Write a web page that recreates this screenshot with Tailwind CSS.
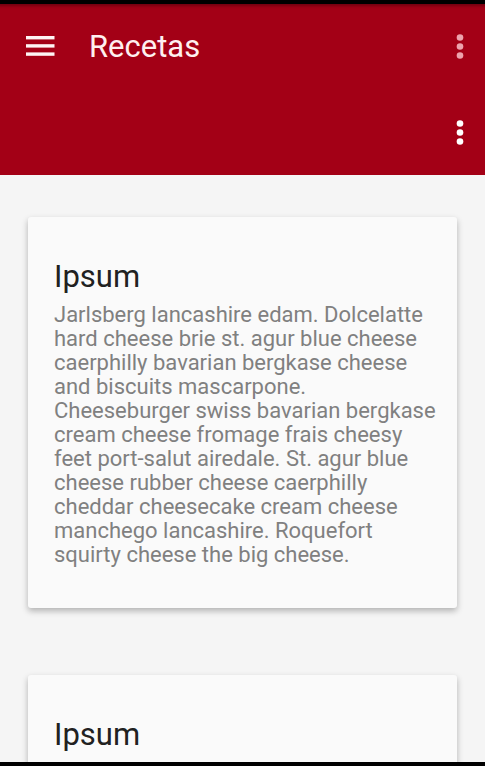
<!DOCTYPE html>
<html lang="es">
<head>
  <meta charset="UTF-8" />
  <meta name="viewport" content="width=device-width, initial-scale=1.0" />
  <title>Recetas</title>
  <script src="https://cdn.jsdelivr.net/npm/@tailwindcss/browser@4"></script>
</head>
<body class="h-screen flex flex-col overflow-hidden bg-[#f5f5f5] border-t-4 border-b-4 border-black font-['Roboto',sans-serif]">

  <!-- Barra superior -->
  <header class="shrink-0 bg-[#a30016] text-white shadow-[inset_0_5px_3px_-3px_rgba(0,0,0,0.3)]">
    <div class="h-[86px] flex items-center pl-6 pr-3">
      <button type="button" aria-label="Abrir menú" class="w-8 h-8">
        <svg viewBox="0 0 32 32" class="w-8 h-8" fill="#fff4f4">
          <rect x="2" y="5" width="28.5" height="3.4" />
          <rect x="2" y="13.2" width="28.5" height="3.4" />
          <rect x="2" y="21.4" width="28.5" height="3.4" />
        </svg>
      </button>
      <h1 class="ml-[33px] text-[31px] leading-9 text-[#fff0f0]">Recetas</h1>
      <button type="button" aria-label="Más opciones" class="ml-auto w-6 h-8">
        <svg viewBox="0 0 24 32" class="w-6 h-8" fill="#eda3ad">
          <circle cx="11" cy="6.5" r="3.3" />
          <circle cx="11" cy="15.5" r="3.3" />
          <circle cx="11" cy="24.5" r="3.3" />
        </svg>
      </button>
    </div>
    <div class="h-[85px] flex items-center justify-end pr-3">
      <button type="button" aria-label="Más acciones" class="w-6 h-8">
        <svg viewBox="0 0 24 32" class="w-6 h-8" fill="#fff">
          <circle cx="11" cy="6.5" r="3.3" />
          <circle cx="11" cy="15.5" r="3.3" />
          <circle cx="11" cy="24.5" r="3.3" />
        </svg>
      </button>
    </div>
  </header>

  <!-- Lista de recetas -->
  <main class="flex-1 min-h-0 overflow-hidden flex flex-col gap-[67px] px-7 pt-[42px]">
    <article class="shrink-0 bg-[#fafafa] rounded-[3px] px-[26px] pt-[42px] pb-[41px] shadow-[0_3px_6px_rgba(0,0,0,0.28)]">
      <h2 class="text-[31px] leading-9 text-[#212121]">Ipsum</h2>
      <p class="mt-2 -mr-4 text-[22px] leading-6 text-[#808080]">
        Jarlsberg lancashire edam. Dolcelatte<br>
        hard cheese brie st. agur blue cheese<br>
        caerphilly bavarian bergkase cheese<br>
        and biscuits mascarpone.<br>
        Cheeseburger swiss bavarian bergkase<br>
        cream cheese fromage frais cheesy<br>
        feet port-salut airedale. St. agur blue<br>
        cheese rubber cheese caerphilly<br>
        cheddar cheesecake cream cheese<br>
        manchego lancashire. Roquefort<br>
        squirty cheese the big cheese.
      </p>
    </article>

    <article class="shrink-0 bg-[#fafafa] rounded-[3px] px-[26px] pt-[42px] pb-[41px] shadow-[0_3px_6px_rgba(0,0,0,0.28)]">
      <h2 class="text-[31px] leading-9 text-[#212121]">Ipsum</h2>
    </article>
  </main>

</body>
</html>
